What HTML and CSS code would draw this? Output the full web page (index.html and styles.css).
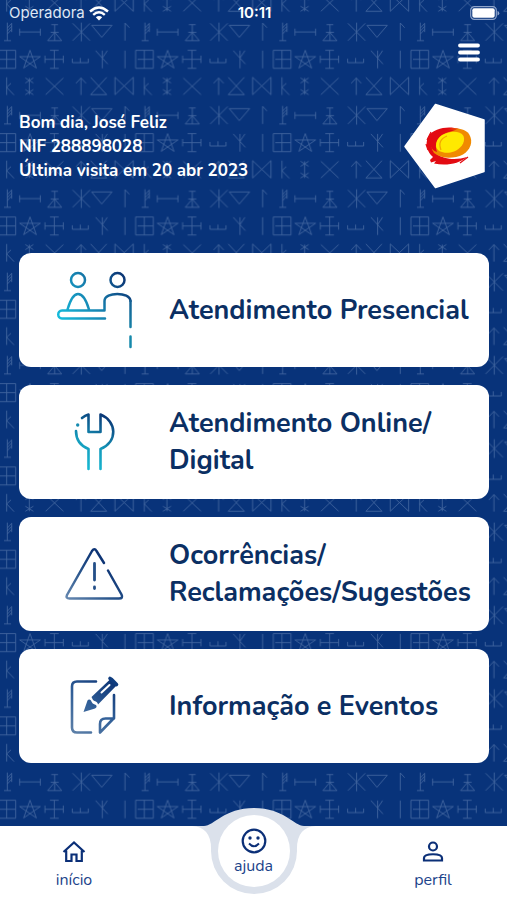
FILE: index.html
```html
<!DOCTYPE html>
<html lang="pt">
<head>
<meta charset="utf-8">
<meta name="viewport" content="width=device-width, initial-scale=1">
<title>Início</title>
<link rel="stylesheet" href="styles.css">
</head>
<body>
<svg class="backdrop" aria-hidden="true">
  <defs>
    <pattern id="symbols" width="413" height="250" patternUnits="userSpaceOnUse" patternTransform="translate(0 19) scale(.3333)">
      <g fill="none" stroke="#42659f" stroke-width="2.6" transform="translate(0 -57)">
        <path d="M22 68V122M12 122H33M22 84L35 70M22 93L35 79M22 102L35 88M35 70V96"/>
        <path d="M59 96H121M59 86V107M121 86V107"/>
        <path d="M164 74V122M154 74H174M152 97H176M164 97L143 122H185Z"/>
        <path d="M218 70L270 122M270 70L218 122M244 68V124"/>
        <path d="M275 76H336L305 112Z"/>
        <path d="M375 122V69L388 83"/>
        <path d="M-6 151H47V205H-6ZM20 151V205M-6 178H47M407 151H460V205H407Z"/>
        <path d="M90 151L109 204L59 170H121L71 204Z"/>
        <path d="M163 151V205M150 151H176M150 205H176M135 178H190M135 167V189M190 167V189"/>
        <path d="M217 176V188H265V176M241 174V188"/>
        <path d="M307 152V205M287 152L323 192M322 152L307 174"/>
        <path d="M375 152V205"/>
        <path d="M20 232V285M20 262L42 285M20 262L33 250"/>
        <path d="M88 234V284M76 234L100 249M100 234L76 249M76 269L100 284M100 269L76 284"/>
        <path d="M137 234L190 284M190 234L137 284"/>
        <path d="M243 285V234M228 250L243 234L258 250"/>
        <path d="M272 232L320 284H272L320 232"/>
        <path d="M345 284V232L400 284V232Z"/>
      </g>
    </pattern>
  </defs>
  <rect width="100%" height="100%" fill="url(#symbols)"/>
</svg>

<div class="status">
  <span class="carrier">Operadora
    <svg width="20" height="15" viewBox="0 0 20 15" aria-hidden="true"><g fill="none" stroke="#fff" stroke-width="2.4"><path d="M1 5.500Q10-2.500 19 5.500"/><path d="M4.200 8.800Q10 3.500 15.800 8.800"/></g><path d="M6.800 11.300Q10 8.500 13.200 11.300L10 14.500Z" fill="#fff"/></svg>
  </span>
  <span class="clock">10:11</span>
  <span class="battery"><svg width="30" height="14" viewBox="0 0 30 14" aria-hidden="true"><rect x=".7" y=".7" width="25.600" height="12.600" rx="3.600" fill="none" stroke="#8ea4ca" stroke-width="1.200"/><rect x="2.300" y="2.300" width="22.400" height="9.400" rx="2" fill="#fff"/><path d="M27.500 5v4.500q1.800-.6 1.800-2.250T27.500 5" fill="#8ea4ca"/></svg></span>
</div>

<header class="top">
  <button class="menu" type="button" aria-label="Menu"><svg width="22" height="20" viewBox="0 0 22 20" aria-hidden="true"><path d="M2 2.500H20M2 9.500H20M2 16.500H20" stroke="#fff" stroke-width="3.800" stroke-linecap="round"/></svg></button>
  <div class="greeting">
    <p>Bom dia, José Feliz<br>NIF 288898028<br>Última visita em 20 abr 2023</p>
    <svg width="82" height="86" viewBox="403 103 82 86" aria-hidden="true">
      <path d="M435.500 104.500L484 120V171.500L435.500 187.500L405 146.500Z" fill="#fff" stroke="#fff" stroke-width="1.500" stroke-linejoin="round"/>
      <path d="M459 129C450 126 434 127 428 137C425 144 427 152 433 157L430 160L431 162.500L436 161L434 163.500C446 166 459 164 467 157C458 160 444 160 437 154Z" fill="#e30b12"/>
      <path d="M427 140L431 132M428 150L426 144M460 163L468 157" stroke="#e30b12" stroke-width="1.200"/>
      <path d="M440 132C448 128 463 126 469 134C474 142 470 150 463 154.500C454 159 441 159 434 153C429 146 431 137 440 132Z" fill="#f08a00"/>
      <path d="M431 147C429 139 436 131 446 129L457 129.500L446 133C437 137 434 144 437 152Q433 151 431 147Z" fill="#e30b12"/>
      <path d="M442 135C449 131 460 130 463.500 136C466 143 460 149 454 151.500C447 154 437 153 436 146Q436 139 442 135Z" fill="#ffe900"/>
      <path d="M441 150Q437 140 447 136" fill="none" stroke="#f4a400" stroke-width="1.200"/>
    </svg>
  </div>
</header>

<main class="cards">
  <a class="card" href="#presencial">
    <svg width="150" height="112" viewBox="19 254 150 112" aria-hidden="true">
      <defs><linearGradient id="g1" gradientUnits="userSpaceOnUse" x1="58" y1="318" x2="125" y2="270"><stop stop-color="#16bddd"/><stop offset=".5" stop-color="#167fae"/><stop offset="1" stop-color="#0a2d6e"/></linearGradient>
      <linearGradient id="g1b" gradientUnits="userSpaceOnUse" x1="0" y1="335" x2="0" y2="290"><stop stop-color="#1689ab"/><stop offset="1" stop-color="#14548d"/></linearGradient></defs>
      <g fill="none" stroke="url(#g1)" stroke-width="2.500" stroke-linecap="round" stroke-linejoin="round"><circle cx="78" cy="280" r="7"/><circle cx="117.500" cy="280" r="7"/><path d="M67.500 309.500C70 301 73 294 78 294S86.500 301 89 309.500M105 318.500H62C57 318.500 57 310.500 62 310.500H104.500V301C104.500 291.500 130 291.500 130.500 301"/><path stroke="url(#g1b)" d="M130.500 301V327M130.500 336.500V347"/></g>
    </svg>
    <span>Atendimento Presencial</span>
  </a>
  <a class="card" href="#online">
    <svg width="150" height="112" viewBox="19 386 150 112" aria-hidden="true">
      <defs><linearGradient id="g2" gradientUnits="userSpaceOnUse" x1="84" y1="466" x2="108" y2="416"><stop stop-color="#17b8d2"/><stop offset=".4" stop-color="#159bbc"/><stop offset="1" stop-color="#0a3474"/></linearGradient></defs>
      <g fill="none" stroke="url(#g2)" stroke-width="2.600" stroke-linecap="round" stroke-linejoin="round"><path d="M82 418Q85 415.500 88.500 414.500V432H100.500V414.500C117 421 118 442 100.500 449V469M88.500 469V449Q76 444 76 431"/></g><circle cx="77.700" cy="425" r="1.700" fill="#168bb0"/>
    </svg>
    <span>Atendimento Online/<wbr>Digital</span>
  </a>
  <a class="card" href="#ocorrencias">
    <svg width="150" height="112" viewBox="19 518 150 112" aria-hidden="true">
      <defs><linearGradient id="g3" gradientUnits="userSpaceOnUse" x1="68" y1="600" x2="102" y2="560"><stop stop-color="#6688b0"/><stop offset=".55" stop-color="#29558c"/><stop offset="1" stop-color="#0d3475"/></linearGradient></defs>
      <g fill="none" stroke="url(#g3)" stroke-width="2.500" stroke-linecap="round" stroke-linejoin="round"><path d="M104 563L96.500 551Q94.500 547.500 92 551L67 595Q65.500 598.500 69.500 598.500H119Q123.500 598.500 121.500 594.500L108 570.500"/></g><path d="M94.500 563.500V580M94.500 587V588.500" stroke="#244f88" stroke-width="2.800" stroke-linecap="round"/>
    </svg>
    <span>Ocorrências/<wbr>Reclamações/Sugestões</span>
  </a>
  <a class="card" href="#eventos">
    <svg width="150" height="112" viewBox="19 650 150 112" aria-hidden="true">
      <defs><linearGradient id="g4" gradientUnits="userSpaceOnUse" x1="75" y1="735" x2="113" y2="680"><stop stop-color="#5d80a8"/><stop offset=".5" stop-color="#315f98"/><stop offset="1" stop-color="#0c3475"/></linearGradient></defs>
      <g fill="none" stroke="url(#g4)" stroke-width="2.600" stroke-linecap="round" stroke-linejoin="round"><path d="M96 681.500H77Q72 681.500 72 686.500V727.500Q72 732.500 77 732.500H91M114 695V718L100 732.500V724Q100 718.500 105.500 718.500H114"/></g>
      <path fill="url(#g4)" d="M83.500 712L87.500 700.500Q89 698.500 91 700.500Q92 704 96 705Q97.500 707 95 708.500ZM91.500 697L111 678.500L117.500 684.500L98 704.500Q97.500 701.500 94.500 701Q92.500 700 91.500 697Z"/>
      <path d="M110 678.500L111.500 679.500L116.500 684.500" fill="none" stroke="#0f3d7f" stroke-width="3.600" stroke-linecap="round"/>
      <path d="M109.500 685L101.500 692.500" fill="none" stroke="#fff" stroke-width="2" stroke-linecap="round"/>
    </svg>
    <span>Informação e Eventos</span>
  </a>
</main>

<nav class="tabs">
  <svg class="bump" width="128" height="88" viewBox="190 808 128 88" aria-hidden="true">
    <path d="M192 826Q212 827 211 851A43 43 0 0 0 297 851Q296 827 316 826H304C294 826 284 808 254 808S214 826 204 826Z" fill="#dbe1eb"/>
    <circle cx="254" cy="851" r="36" fill="#fff"/>
  </svg>
  <a class="tab" href="#inicio"><svg width="26" height="26" viewBox="0 0 26 26" aria-hidden="true"><path d="M5.200 11.500V22H10.500V15.500H15.500V22H20.800V11.500M2.500 13L13 3.500L23.500 13" fill="none" stroke="#0b2f77" stroke-width="2.200"/></svg>início</a>
  <a class="tab help" href="#ajuda"><svg width="26" height="26" viewBox="0 0 26 26" aria-hidden="true"><circle cx="13" cy="13" r="11.300" fill="none" stroke="#0b2f77" stroke-width="2.200"/><circle cx="9" cy="10" r="1.700" fill="#0b2f77"/><circle cx="17" cy="10" r="1.700" fill="#0b2f77"/><path d="M8 15.500Q13 21 18 15.500" fill="none" stroke="#0b2f77" stroke-width="1.900"/></svg>ajuda</a>
  <a class="tab" href="#perfil"><svg width="26" height="26" viewBox="0 0 26 26" aria-hidden="true"><g fill="none" stroke="#0b2f77" stroke-width="2.200"><circle cx="13" cy="7.500" r="4"/><path d="M4 21.500V19C4 14 22 14 22 19V21.500Z"/></g></svg>perfil</a>
</nav>
</body>
</html>
```
FILE: styles.css
```css
* { box-sizing: border-box; }
body {
  margin: 0;
  min-height: 100vh;
  display: flex;
  flex-direction: column;
  position: relative;
  background: #08337a;
  color: #fff;
  font-family: Nunito, Lato, sans-serif;
}
a { color: inherit; text-decoration: none; }
svg { display: block; flex: none; }
.backdrop { position: absolute; inset: 0; width: 100%; height: 100%; z-index: -1; }

.status {
  display: grid;
  grid-template-columns: 1fr auto 1fr;
  align-items: center;
  height: 28px;
  padding: 0 7px 2px 9px;
  font: 15px/20px Inter, sans-serif;
}
.carrier { display: flex; align-items: center; gap: 4px; color: #dfe7f4; }
.clock { font-weight: 600; }
.battery { justify-self: end; }

.top { padding: 15px 22px 0 19px; }
.menu { display: block; margin: 0 5px 0 auto; padding: 0; border: 0; background: none; }
.greeting { display: flex; justify-content: space-between; margin-top: 40px; }
.greeting p { margin: 8px 0 0; font-size: 17px; line-height: 24px; font-weight: 700; }

.cards { display: flex; flex-direction: column; gap: 18px; padding: 64px 18px 24px 19px; }
.card {
  display: flex;
  align-items: center;
  min-height: 114px;
  border-radius: 12px;
  background: #fff;
  color: #0b2f63;
  font-size: 27px;
  line-height: 37px;
  font-weight: 700;
}

.tabs {
  position: relative;
  display: flex;
  justify-content: space-between;
  margin-top: auto;
  height: 74px;
  padding: 13px 34px 0;
  background: #fff;
  color: #1c438a;
  font-size: 16px;
  line-height: 20px;
}
.bump { position: absolute; left: 50%; bottom: 4px; margin-left: -64px; }
.tab { position: relative; display: flex; flex-direction: column; align-items: center; gap: 5px; width: 80px; }
.help { gap: 2px; margin-top: -11px; }
```
